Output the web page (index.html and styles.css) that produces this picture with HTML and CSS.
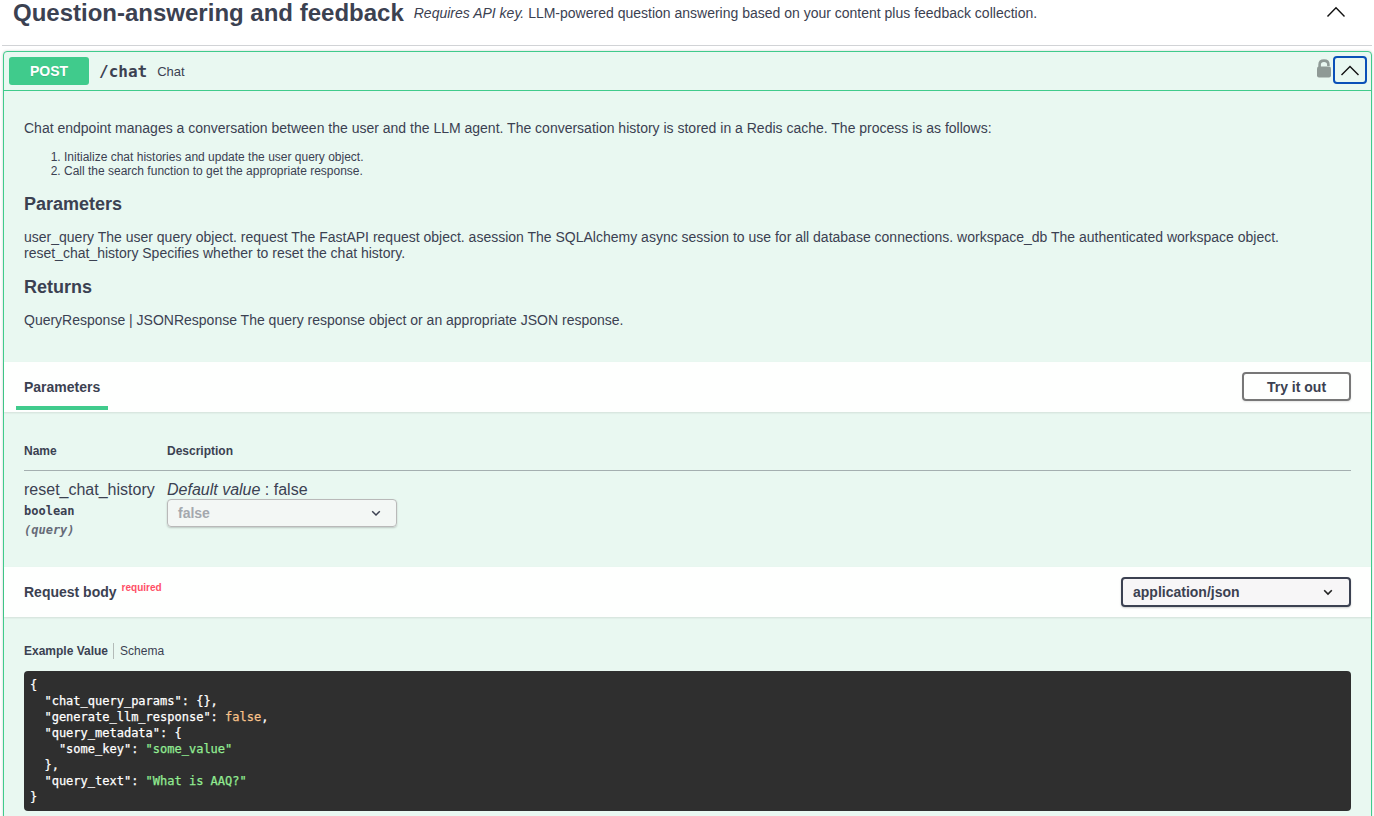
FILE: index.html
```html
<!DOCTYPE html>
<html lang="en">
<head>
<meta charset="utf-8">
<title>Question-answering and feedback</title>
<link rel="stylesheet" href="styles.css">
</head>
<body>
<div class="wrapper">
  <header class="tag">
    <h3 class="tag-title">Question-answering and feedback</h3>
    <p class="tag-desc"><em>Requires API key.</em> LLM-powered question answering based on your content plus feedback collection.</p>
    <svg class="tag-arrow" width="20" height="20" viewBox="0 0 20 20"><path d="M1.5 15.5 10 6.8l8.5 8.7" fill="none" stroke="#111" stroke-width="1.4"/></svg>
  </header>
  <section class="opblock">
    <div class="summary">
      <span class="method">POST</span>
      <span class="path">/chat</span>
      <span class="summary-text">Chat</span>
      <span class="summary-icons">
        <svg class="lock" width="16" height="20" viewBox="0 0 16 20"><path d="M3.6 9V5.6C3.6 3.2 5.4 1.6 8 1.6s4.4 1.6 4.4 4V7" fill="none" stroke="#8f9a96" stroke-width="2.6"/><rect x="1" y="7.5" width="14" height="11" rx="2" fill="#8f9a96"/></svg>
        <span class="collapse"><svg width="20" height="20" viewBox="0 0 20 20"><path d="M1.5 15 10 6.5l8.5 8.5" fill="none" stroke="#111" stroke-width="1.4"/></svg></span>
      </span>
    </div>
    <div class="description">
      <p>Chat endpoint manages a conversation between the user and the LLM agent. The conversation history is stored in a Redis cache. The process is as follows:</p>
      <ol class="steps">
        <li>Initialize chat histories and update the user query object.</li>
        <li>Call the search function to get the appropriate response.</li>
      </ol>
      <h4>Parameters</h4>
      <p>user_query The user query object. request The FastAPI request object. asession The SQLAlchemy async session to use for all database connections. workspace_db The authenticated workspace object. reset_chat_history Specifies whether to reset the chat history.</p>
      <h4>Returns</h4>
      <p>QueryResponse | JSONResponse The query response object or an appropriate JSON response.</p>
    </div>
    <div class="bar bar-tabs">
      <span class="tab">Parameters</span>
      <button class="try">Try it out</button>
    </div>
    <div class="params">
      <div class="param-head">
        <span class="col-name">Name</span>
        <span>Description</span>
      </div>
      <div class="param-row">
        <div class="col-name">
          <div class="param-name">reset_chat_history</div>
          <div class="param-type">boolean</div>
          <div class="param-in">(query)</div>
        </div>
        <div>
          <div class="param-default"><em>Default value</em> : false</div>
          <div class="select select-off">false<svg width="12" height="12" viewBox="0 0 12 12"><path d="M2.2 4.2 6 8l3.8-3.8" fill="none" stroke="#3b4151" stroke-width="1.5"/></svg></div>
        </div>
      </div>
    </div>
    <div class="bar bar-body">
      <span class="rb-title">Request body<sup class="required">required</sup></span>
      <div class="select select-on">application/json<svg width="12" height="12" viewBox="0 0 12 12"><path d="M2.2 4.2 6 8l3.8-3.8" fill="none" stroke="#222" stroke-width="1.6"/></svg></div>
    </div>
    <div class="body-content">
      <div class="tabs"><span class="tab-active">Example Value</span><span class="tab-other">Schema</span></div>
<pre class="code">{
  "chat_query_params": {},
  "generate_llm_response": <span class="lit">false</span>,
  "query_metadata": {
    "some_key": <span class="str">"some_value"</span>
  },
  "query_text": <span class="str">"What is AAQ?"</span>
}</pre>
    </div>
  </section>
</div>
</body>
</html>
```
FILE: styles.css
```css
html, body { margin: 0; padding: 0; background: #fff; }
body { height: 816px; overflow: hidden; font-family: "Liberation Sans", Arial, sans-serif; color: #3b4151; }
.wrapper { padding: 0 2px 0 3px; }

.tag { display: flex; align-items: flex-start; height: 46px; box-sizing: border-box; margin-left: -1px; padding-left: 11px; border-bottom: 1px solid #d1d3d6; position: relative; }
.tag-title { margin: 0; font-size: 24px; line-height: 25px; font-weight: 700; }
.tag-desc { margin: 0; padding-left: 10px; font-size: 14px; line-height: 27px; }
.tag-arrow { position: absolute; right: 26px; top: 1px; }

.opblock { margin-top: 5px; background: #e9f8f1; border: 1px solid #40cb8c; border-radius: 4px; box-shadow: 0 0 3px rgba(0,0,0,.19); height: 800px; }
.summary { display: flex; align-items: center; height: 38px; padding: 0 5px; border-bottom: 1px solid #40cb8c; }
.method { width: 80px; height: 28px; background: #40cb8c; border-radius: 3px; color: #fff; font-size: 14px; font-weight: 700; line-height: 28px; text-align: center; text-shadow: 0 1px 0 rgba(0,0,0,.1); }
.path { margin-left: 10px; padding-top: 1px; font: 700 16px/20px "DejaVu Sans Mono", monospace; }
.summary-text { margin-left: 10px; padding-top: 1px; font-size: 13px; }
.summary-icons { margin-left: auto; display: flex; align-items: center; }
.lock { margin-right: 1px; margin-top: -5px; }
.collapse { display: flex; align-items: center; justify-content: center; width: 30px; height: 24px; border: 2px solid #0a50b8; border-radius: 4px; margin-right: -1px; margin-top: -2px; }

.description { height: 271px; box-sizing: border-box; padding: 29px 20px 0; font-size: 14px; line-height: 16px; }
.description p { margin: 0; }
.steps { margin: 14px 0 0; padding-left: 40px; font-size: 12px; line-height: 14px; }
.description h4 { margin: 16px 0 15px; font-size: 18px; line-height: 20px; font-weight: 700; }

.bar { display: flex; align-items: center; justify-content: space-between; background: rgba(255,255,255,.92); box-shadow: 0 1px 2px rgba(0,0,0,.1); box-sizing: border-box; padding: 0 20px; }
.bar-tabs { height: 50px; padding-left: 12px; align-items: flex-start; }
.tab { display: block; width: 92px; height: 48px; box-sizing: border-box; padding: 18px 0 0 8px; font-size: 14px; line-height: 15px; font-weight: 700; border-bottom: 4px solid #40cb8c; }
.try { width: 109px; height: 29px; margin-top: 10px; background: transparent; border: 2px solid #777; border-radius: 4px; color: #3b4151; font: 700 14px "Liberation Sans", Arial, sans-serif; box-shadow: 0 1px 2px rgba(0,0,0,.1); }

.params { height: 155px; box-sizing: border-box; padding: 0 20px; }
.param-head { display: flex; height: 59px; box-sizing: border-box; padding-top: 32px; border-bottom: 1px solid rgba(59,65,81,.4); font-size: 12px; line-height: 15px; font-weight: 700; }
.col-name { width: 143px; flex: none; }
.param-row { display: flex; padding-top: 9px; }
.param-name { font-size: 16px; line-height: 20px; }
.param-type { margin-top: 4px; font: 700 12px/14px "DejaVu Sans Mono", monospace; }
.param-in { margin-top: 5px; font: italic 700 12px/15px "DejaVu Sans Mono", monospace; color: #666b78; }
.param-default { font-size: 16px; line-height: 20px; }

.select { display: flex; align-items: center; justify-content: space-between; box-sizing: border-box; border-radius: 4px; font-size: 14px; font-weight: 700; background: #f7f7f7; }
.select-off { width: 230px; height: 28px; margin-top: -1px; padding: 0 14px 0 10px; color: #a4a8ae; background: rgba(247,247,247,.7); border: 1px solid #b9b9b9; box-shadow: 0 1px 2px rgba(0,0,0,.2); }
.select-on { width: 230px; height: 30px; padding: 0 15px 0 10px; color: #3b4151; background: #f7f6f7; border: 2px solid #3b4151; box-shadow: 0 1px 2px rgba(0,0,0,.2); }

.bar-body { height: 50px; }
.rb-title { font-size: 14px; font-weight: 700; }
.required { position: relative; top: 0; margin-left: 5px; font-size: 10px; font-weight: 700; color: #ff4f66; vertical-align: super; line-height: 0; }

.body-content { padding: 26px 20px 0; }
.tabs { display: flex; align-items: center; height: 16px; font-size: 12px; line-height: 16px; }
.tab-active { font-weight: 700; padding-right: 5px; border-right: 1px solid #b3bbb8; }
.tab-other { padding-left: 6px; }
.code { margin: 12px 0 0; height: 140px; box-sizing: border-box; padding: 6px 6px 0; background: #2f2f2f; border-radius: 4px; color: #fff; font: 400 12px/16px "DejaVu Sans Mono", monospace; -webkit-text-stroke: .25px currentColor; }
.lit { color: #f8c28a; }
.str { color: #92ec92; }
```
